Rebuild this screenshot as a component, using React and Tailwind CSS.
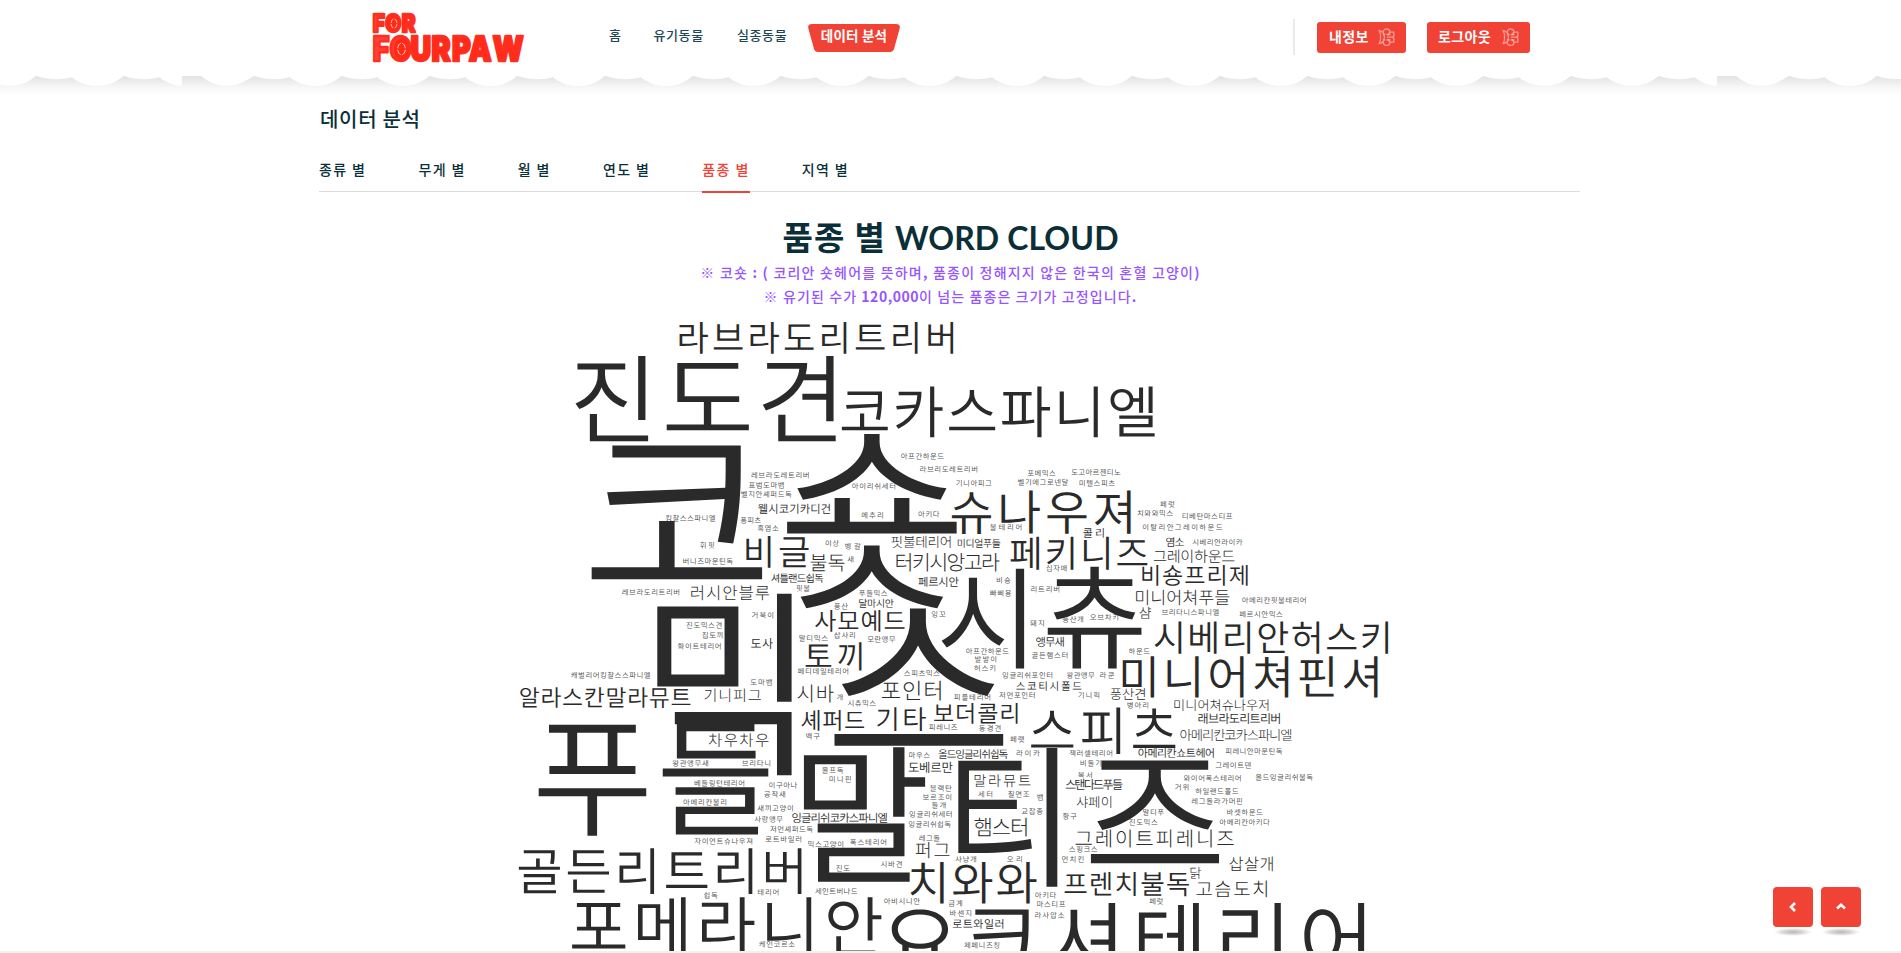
import React from "react";

const CLOUD_FONT = '"Noto Sans CJK KR", "Noto Sans", sans-serif';

/* Words whose syllables are placed one by one: [text, [x0, y0, x1, y1], ...] */
const HERO_WORDS = [
  ["진도견", [574.5, 355.7, 648, 442], [666, 363, 748.5, 431], [762, 355.7, 835.3, 442]],
  ["코숏", [591, 445, 761.7, 580.7], [786.3, 432.7, 956, 608.3]],
  ["믹스", [656, 593, 791.5, 776.3], [833.7, 608, 1003.3, 746.7]],
  ["푸들", [538, 724, 646, 836], [662, 722.7, 768.3, 834]],
  ["말티즈", [803.3, 747, 925, 883], [957, 747, 1057, 887], [1090, 760, 1218.7, 863]],
  ["시츄", [940.7, 569, 1024, 669], [1047, 566, 1141, 669]],
  [
    "요크셔테리어",
    [884, 909.5, 955, 972],
    [966, 909.5, 1037, 971],
    [1049, 902.7, 1114.7, 981],
    [1138.3, 902.7, 1198.5, 981],
    [1222, 902.7, 1280.5, 981],
    [1303.7, 902.7, 1363.7, 981],
  ],
];

/* Words fitted to a box: [text, x0, y0, x1, y1] */
const WORDS = [
  ["라브라도리트리버", 679, 322.3, 952.5, 354.3],
  ["코카스파니엘", 841.3, 386.7, 1154.3, 438],
  ["슈나우져", 951.3, 490, 1130, 534],
  ["비글", 745.7, 536, 808, 568],
  ["불독", 810, 554.5, 844, 572],
  ["페키니즈", 1010, 536.7, 1147, 570],
  ["터키시앙고라", 896, 552.7, 999, 571.3],
  ["핏불테리어", 891, 535.7, 950, 548],
  ["콜리", 1082.7, 528, 1103.3, 538],
  ["염소", 1165.7, 537, 1183.3, 546.7],
  ["그레이하운드", 1153.3, 549, 1234, 562.7],
  ["비숑프리제", 1141.7, 565, 1247, 586],
  ["미니어쳐푸들", 1135.7, 589.3, 1229, 605],
  ["샴", 1139, 606.7, 1150.5, 619],
  ["시베리안허스키", 1154, 621.7, 1387.7, 654.3],
  ["미니어쳐핀셔", 1122, 656, 1377, 697.7],
  ["풍산견", 1110, 688, 1144.5, 700],
  ["미니어쳐슈나우저", 1174, 699, 1268, 711],
  ["래브라도리트리버", 1198, 713, 1279.5, 724],
  ["아메리칸코카스파니엘", 1180, 729, 1291, 741],
  ["아메리칸쇼트헤어", 1138, 748, 1213.3, 758],
  ["미디얼푸들", 957.3, 539, 1000, 548],
  ["페르시안", 918, 576.7, 958, 587],
  ["웰시코기카디건", 757.7, 504, 829.7, 514.3],
  ["셔틀랜드쉽독", 770.7, 573.5, 822.7, 583],
  ["러시안블루", 690.7, 585, 768.7, 600],
  ["달마시안", 858.7, 599, 893, 608],
  ["사모예드", 814.7, 610, 904, 632],
  ["토끼", 805, 642, 861, 670.5],
  ["도사", 750.7, 638, 772.3, 649],
  ["앵무새", 1035.7, 637, 1063.3, 647.3],
  ["시바", 797, 684, 833, 702],
  ["포인터", 881.3, 681, 940.3, 701],
  ["스코티시폴드", 1015.7, 681.7, 1081, 691.3],
  ["셰퍼드", 801, 710, 863.7, 731],
  ["기타", 876.7, 707, 925.5, 731],
  ["보더콜리", 933.7, 703, 1017, 724],
  ["스피츠", 1030.7, 707, 1175, 754],
  ["알라스칸말라뮤트", 519.7, 687, 690, 708],
  ["기니피그", 704, 688.7, 760.3, 702.3],
  ["차우차우", 708.3, 733, 768, 747],
  ["골든리트리버", 518.3, 848, 801, 894],
  ["포메라니안", 571.5, 896.7, 881, 956],
  ["말라뮤트", 974, 774, 1030, 787],
  ["도베르만", 908, 761.7, 952, 773],
  ["올드잉글리쉬쉽독", 938, 749, 1007.3, 758.7],
  ["햄스터", 974, 818, 1026, 837],
  ["퍼그", 915, 841.7, 949, 858.3],
  ["치와와", 910, 862, 1036, 904],
  ["잉글리쉬코카스파니엘", 791.7, 813, 886.7, 823.3],
  ["스탠다드푸들", 1065, 779, 1122, 790],
  ["샤페이", 1076, 796, 1110.7, 808],
  ["그레이트피레니즈", 1075, 829, 1233, 847],
  ["삽살개", 1229, 857, 1272.3, 871.7],
  ["닭", 1190, 867, 1202, 879],
  ["고슴도치", 1196, 880, 1266.3, 897],
  ["프렌치불독", 1064, 871.7, 1188.5, 896.3],
  ["로트와일러", 952.3, 919, 1002.7, 929],
];

/* Rare breeds share the smallest size: [text, x0, x1, centreY] */
const SMALL_WORDS = [
  ["레브라도레트리버", 751, 808.3, 475], ["표범도마뱀", 748.3, 783.3, 485], ["벨지안셰퍼드독", 741, 791, 494],
  ["킹찰스스파니엘", 665.3, 714.7, 518.3], ["퐁피츠", 740, 760.3, 520], ["흑염소", 757, 778, 528.3],
  ["휘핏", 699.7, 713.7, 545.3], ["버니즈마운틴독", 682.7, 732.3, 561], ["아프간하운드", 900.7, 943.3, 456],
  ["라브리도레트리버", 919.7, 976.7, 469], ["아이리쉬세터", 851.7, 894.7, 486], ["메추리", 861.3, 882.3, 515],
  ["아키다", 918, 939, 514], ["이상", 825, 838.3, 543], ["벵갈", 844.7, 860, 546.7], ["새", 847, 853, 559],
  ["기니아피그", 955.7, 991, 483], ["포메믹스", 1027, 1055, 473], ["도고아르젠티노", 1071, 1120, 472.3],
  ["벨기에그로넨달", 1017.7, 1067.7, 482.3], ["미텔스피츠", 1079, 1114.3, 483], ["페럿", 1159.7, 1173.7, 504],
  ["치와와믹스", 1137, 1172.3, 513], ["티베탄마스티프", 1182, 1231.7, 516], ["이탈리안그레이하운드", 1142.3, 1221.7, 527.7],
  ["불테리어", 989.7, 1021, 527], ["시베리안라이카", 1192, 1242, 542.3], ["십자매", 1045.7, 1066, 568.3],
  ["비숑", 996.3, 1010, 580.3], ["빠삐용", 989.7, 1010.7, 593], ["리트리버", 1030.7, 1058.7, 589],
  ["아메리칸핏불테리어", 1241.7, 1305.3, 600.7], ["브리타니스파니엘", 1161.3, 1218.3, 612.3], ["페르시안믹스", 1239, 1282, 614.3],
  ["오브차키", 1089.7, 1117.7, 617], ["풍산개", 1062, 1082.7, 619], ["돼지", 1029.7, 1043.3, 623], ["잉꼬", 931.3, 945, 614.3],
  ["푸들믹스", 858.7, 886.7, 593.3], ["풍산", 833.7, 847.3, 606], ["핏불", 796, 809.3, 588.3], ["말티믹스", 799, 827.3, 638.3],
  ["삽사리", 833.7, 854.3, 635.7], ["모란앵무", 867, 894.7, 639.3], ["페티데일테리어", 797.3, 847.7, 671.3],
  ["스피츠믹스", 903.7, 939, 673], ["아프간하운드", 965.7, 1008.3, 651], ["발발이", 974.7, 995.7, 659.7],
  ["허스키", 973.7, 994.7, 668.3], ["골든햄스터", 1031.3, 1067, 655.3], ["잉글리쉬포인터", 1002, 1051.7, 675.3],
  ["왕관앵무", 1066.3, 1094, 675.3], ["라쿤", 1099.7, 1113.7, 675.3], ["하운드", 1128.3, 1149.3, 651],
  ["기니픽", 1077.7, 1098.7, 695], ["저먼포인터", 998.7, 1034.3, 695], ["피플테리어", 953.7, 989.7, 697],
  ["개", 836.3, 842.7, 697.7], ["시츄믹스", 847.3, 875.3, 703], ["병아리", 1127, 1147.7, 705.3], ["피레니즈", 928.7, 956.7, 727],
  ["동경견", 978.7, 1000, 728], ["백구", 805.7, 819.3, 736], ["페랫", 1009.7, 1023.7, 739.3], ["마우스", 908.7, 929.3, 755],
  ["라이카", 1016, 1039, 753.7], ["잭러셀테리어", 1069, 1111.7, 753.7], ["피레니안마운틴독", 1225, 1281.7, 751.7],
  ["비둘기", 1080, 1100.7, 763.3], ["그레이트덴", 1215, 1250.3, 765.3], ["복서", 1077.7, 1091.3, 775.3],
  ["와이어폭스테리어", 1183.3, 1240.3, 778.3], ["올드잉글리쉬불독", 1255, 1312.3, 777.3], ["거위", 1174.7, 1188, 787.3],
  ["하일랜드폴드", 1195, 1237.7, 791.3], ["레그돌라가머핀", 1191.3, 1241.7, 801.3], ["바셋하운드", 1226.7, 1262, 812],
  ["아메리칸아키다", 1219.3, 1269.3, 822.3], ["말티푸", 1142.7, 1163.3, 812.3], ["진도믹스", 1128.7, 1157, 822.3],
  ["황구", 1062.3, 1076, 816.3], ["스핑크스", 1068.7, 1096.7, 849.3], ["먼치킨", 1061.7, 1083, 859], ["페럿", 1149, 1162.3, 901.7],
  ["레브라도리트리버", 621.7, 678.7, 592.3], ["진도믹스견", 686, 721, 625], ["집토끼", 701.7, 722, 635],
  ["화이트테리어", 677.3, 720.3, 646.3], ["거북이", 751.3, 772.7, 615.3], ["도마뱀", 750, 771.3, 682],
  ["캐벌리어킹찰스스파니엘", 570.7, 649.7, 675.3], ["왕관앵무새", 672, 707.7, 763.3], ["브리타니", 741.7, 769.7, 763.3],
  ["베들링턴테리어", 694, 743.7, 783.3], ["이구아나", 768.7, 796.7, 785], ["공작새", 763.7, 784.7, 794.3],
  ["아메리칸불리", 683, 725.7, 802.3], ["새끼고양이", 757, 792.3, 808.3], ["사랑앵무", 754, 782.3, 819.3],
  ["저먼셰퍼드독", 769.7, 812.3, 829.3], ["로트바일러", 765, 800.7, 839.3], ["자이언트슈나우져", 694, 751.7, 841],
  ["쉽독", 703.3, 717, 895.3], ["테리어", 757.3, 778, 892], ["케인코르소", 758.7, 794.3, 944], ["울프독", 821.7, 842.7, 770.3],
  ["미니핀", 829, 850.3, 779.7], ["블랙탄", 929.7, 951, 788.3], ["보르조이", 922.3, 950.7, 797], ["들개", 931.3, 945, 805.3],
  ["잉글리쉬세터", 909, 951.3, 814], ["잉글리쉬쉽독", 908.3, 950.3, 824], ["레그돌", 918.7, 939.3, 838.3],
  ["세터", 977.7, 991.7, 794], ["칠면조", 1007.7, 1028.7, 794], ["뱀", 1037, 1043.3, 797], ["교잡종", 1021, 1042.3, 811],
  ["사냥개", 954.7, 975.7, 859], ["오리", 1006.7, 1021.3, 859.7], ["믹스고양이", 807.7, 842.7, 844], ["폭스테리어", 849.7, 885.7, 842],
  ["진도", 835.7, 849.3, 868], ["시바견", 880.3, 901.3, 864], ["세인트버나드", 814.7, 856.7, 891], ["아비시니안", 883.7, 919.3, 901.3],
  ["금계", 948, 961.7, 903.3], ["바센지", 949.7, 970.7, 913.3], ["아키타", 1034.7, 1055.7, 895], ["마스티프", 1036.7, 1064.7, 904],
  ["라사압소", 1034.7, 1063.7, 915], ["제페니즈칭", 963.7, 998.7, 945],
];

let measureContext = null;

/* Ink extents of a string, in em */
function inkOf(text, weight) {
  if (!measureContext) measureContext = document.createElement("canvas").getContext("2d");
  measureContext.font = `${weight} 200px ${CLOUD_FONT}`;
  const m = measureContext.measureText(text);
  return {
    left: m.actualBoundingBoxLeft / 200,
    right: m.actualBoundingBoxRight / 200,
    top: m.actualBoundingBoxAscent / 200,
    bottom: m.actualBoundingBoxDescent / 200,
  };
}

function FittedWord({ text, x0, y0, x1, y1 }) {
  const height = y1 - y0;
  const weight = height > 20.5 || height < 11.5 ? 350 : 300;
  const ink = inkOf(text, weight);
  const size = height / (ink.top + ink.bottom);
  const natural = (ink.left + ink.right) * size;
  const spacing = text.length > 1 ? (x1 - x0 - natural) / (text.length - 1) : 0;
  return (
    <text x={x0 + ink.left * size} y={y0 + ink.top * size} fontSize={size} fontWeight={weight} letterSpacing={spacing}>
      {text}
    </text>
  );
}

function HeroSyllable({ char, box }) {
  const [x0, y0, x1, y1] = box;
  const ink = inkOf(char, 350);
  const size = (y1 - y0) / (ink.top + ink.bottom);
  const stretch = (x1 - x0) / ((ink.left + ink.right) * size);
  return (
    <text
      fontSize={size}
      fontWeight={350}
      transform={`translate(${x0 + ink.left * size * stretch} ${y0 + ink.top * size}) scale(${stretch} 1)`}
    >
      {char}
    </text>
  );
}

function SmallWord({ text, x0, x1, cy }) {
  const size = 7.4;
  const ink = inkOf(text, 400);
  const natural = (ink.left + ink.right) * size;
  const spacing = text.length > 1 ? (x1 - x0 - natural) / (text.length - 1) : 0;
  return (
    <text x={x0 + ink.left * size} y={cy + ((ink.top - ink.bottom) / 2) * size} fontSize={size} letterSpacing={spacing}>
      {text}
    </text>
  );
}

function WordCloud() {
  return (
    <svg
      className="mx-auto block h-[636px] w-[900px] shrink-0 fill-[#2a2a2a]"
      viewBox="500.5 315 900 636"
      style={{ fontFamily: CLOUD_FONT }}
      textRendering="geometricPrecision"
    >
      {HERO_WORDS.map(([text, ...boxes]) => (
        <g key={text}>
          {boxes.map((box, i) => (
            <HeroSyllable key={i} char={text[i]} box={box} />
          ))}
        </g>
      ))}
      {WORDS.map(([text, x0, y0, x1, y1]) => (
        <FittedWord key={text} text={text} x0={x0} y0={y0} x1={x1} y1={y1} />
      ))}
      <g fillOpacity="0.8">
        {SMALL_WORDS.map(([text, x0, x1, cy], i) => (
          <SmallWord key={i} text={text} x0={x0} x1={x1} cy={cy} />
        ))}
      </g>
    </svg>
  );
}

function Logo() {
  return (
    <svg className="h-[54px] w-[158px] shrink-0 overflow-visible" viewBox="0 0 158 54">
      <defs>
        <linearGradient id="logo-red" x1="0" y1="0" x2="1" y2="0">
          <stop offset="0" stopColor="#ff4438" />
          <stop offset="0.3" stopColor="#ff2a18" />
          <stop offset="1" stopColor="#ff2d1c" />
        </linearGradient>
      </defs>
      <g fill="url(#logo-red)" stroke="#ff2f1f" strokeWidth="2.4" strokeLinejoin="round" fontFamily="Inter, sans-serif" fontWeight="900" transform="scale(0.84 1)">
        <text x="2 17 36.500" y="20.3" fontSize="24.5">FOR</text>
        <text x="2 22 47 72 96.500 116.500 145" y="49" fontSize="34">FOURPAW</text>
      </g>
      <g fill="#ff2a18">
        <ellipse cx="23" cy="11.5" rx="5.500" ry="7.500" />
        <ellipse cx="30.5" cy="37" rx="7.500" ry="10.500" />
      </g>
      <g fill="none" stroke="#fff" strokeOpacity="0.75" strokeWidth="1">
        <ellipse cx="23" cy="11.5" rx="2.800" ry="4.400" />
        <ellipse cx="30.5" cy="37" rx="3.800" ry="5.800" />
      </g>
      <path d="M19.500 11.500h7M23 6.500v10M26 37h9M30.500 30.500v13" stroke="#ff2a18" strokeWidth="1.6" />
    </svg>
  );
}

/* Outlined flower drawn behind the label end of a button */
function Flower() {
  return (
    <svg className="h-[18px] w-[17px]" viewBox="0 0 17 18" fill="none" stroke="#fff" strokeOpacity="0.45" strokeWidth="1.3" strokeLinejoin="round">
      <path d="M1 2.500c2 .2 3.400 1 4.200 2.500C5 3 6 1 8.200 1c2.300 0 3.800 1.400 3.800 3.200h3.800v4.200l-1.400.8 1.400.8v4.200H12c0 1.800-1.500 3.200-3.800 3.200-2.200 0-3.200-1.800-3-4C4.400 14.900 3 15.500 1 15.700l1.500-3.400V6z" />
      <path d="M5.200 5l2 2.200M5.200 13.400l2-2.200M12 4.200L10 7M12 14.200l-2-3M8.800 9.200h5.600" />
      <path d="M5 6.500c2 1.500 2 4 0 5.500M8.500 6.500h4M8.500 12h4" />
    </svg>
  );
}

/* One tile of the cloud-shaped header edge, 1535 wide */
function scallopTile(start) {
  let d = `M${start} -1H${start + 1535}V10`;
  for (let k = 16; k >= 0; k--) {
    const left = start + 72 + 87.8 * k;
    const right = left + 35.6;
    if (k === 16) d += `C${right + 14} 9.500 ${right + 6} 6 ${right} 1.200`;
    else d += `C${right + 42} 8 ${right + 34} 9.800 ${right + 26} 9.800C${right + 14} 9.800 ${right + 6} 6 ${right} 1.200`;
    d += `C${right - 10} 4 ${left + 12} 4 ${left} -0.200`;
  }
  d += `C${start + 60} 7 ${start + 55} 9.800 ${start + 44} 9.800C${start + 32} 9.800 ${start + 26} 5 ${start + 19} 0H${start}Z`;
  return d;
}

function HeaderEdge() {
  return (
    <div className="h-[22px] w-full bg-[linear-gradient(to_bottom,#e3e3e3_0px,#ebebeb_5px,#f5f5f5_10px,#fbfbfb_15px,#ffffff_21px)]">
      <svg className="block h-[22px] w-[1901px]" viewBox="0 0 1901 22" fill="#fff">
        <path d={scallopTile(-1353)} />
        <path d={scallopTile(182)} />
        <path d={scallopTile(1717)} />
      </svg>
    </div>
  );
}

function NavLink({ className, children }) {
  return <a className={`text-[13px] font-medium tracking-[0.6px] text-[#204853] ${className}`}>{children}</a>;
}

function HeaderButton({ className, children }) {
  return (
    <button className={`flex h-[31px] items-center justify-between rounded-[3px] bg-[#f04336] pr-[11px] text-[14px] font-bold tracking-[0.4px] text-white ${className}`}>
      <span className="relative -top-px whitespace-nowrap">{children}</span>
      <Flower />
    </button>
  );
}

function Header() {
  return (
    <header>
      <div className="flex h-[76px] items-start pl-[371px]">
        <div className="pt-[12px]">
          <Logo />
        </div>
        <nav className="flex h-[70px] items-center whitespace-nowrap pl-[80px]">
          <NavLink className="w-[44.500px]">홈</NavLink>
          <NavLink className="w-[83.500px]">유기동물</NavLink>
          <NavLink className="w-[71px]">실종동물</NavLink>
          <a className="relative flex h-[28px] w-[92px] items-center justify-center text-[13.500px] font-bold tracking-[0.2px] text-white">
            <svg className="absolute inset-0 mt-[3px]" width="92" height="28" viewBox="0 0 92 28" fill="#f04336">
              <path d="M4 0H88Q93 0 91.500 5L86 25Q85 28 82 28H10Q7 28 6 25L.5 5Q-1 0 4 0Z" />
            </svg>
            <span className="relative">데이터 분석</span>
          </a>
        </nav>
        <div className="flex items-center pl-[393px] pt-[19px]">
          <div className="h-[36px] w-[2px] bg-[#ecece6]" />
          <HeaderButton className="ml-[22px] w-[89px] pl-[12px]">내정보</HeaderButton>
          <HeaderButton className="ml-[21px] w-[103px] pl-[11px]">로그아웃</HeaderButton>
        </div>
      </div>
      <HeaderEdge />
    </header>
  );
}

const TABS = ["종류 별", "무게 별", "월 별", "연도 별", "품종 별", "지역 별"];

function Tabs() {
  return (
    <div className="mt-[18px] flex h-[41px] gap-[52px] border-b border-[#dcdcdc]">
      {TABS.map((tab) => (
        <a
          key={tab}
          className={
            tab === "품종 별"
              ? "h-[42px] border-b-[2px] border-[#f04336] pt-[8px] text-[14px] font-medium leading-[21px] tracking-[1.4px] text-[#f04336]"
              : "h-[42px] pt-[8px] text-[14px] font-medium leading-[21px] tracking-[1.4px] text-[#0b2f38]"
          }
        >
          {tab}
        </a>
      ))}
    </div>
  );
}

function FloatingButton({ children }) {
  return (
    <div className="flex flex-col items-center">
      <button className="flex h-[40px] w-[40px] items-center justify-center rounded-[4px] bg-[#f04336]">
        <svg width="12" height="12" viewBox="0 0 12 12" fill="none" stroke="#fff" strokeWidth="2.600">
          {children}
        </svg>
      </button>
      <div className="mt-px h-[8px] w-[38px] bg-[radial-gradient(closest-side,#b5b5b5,#dedede_60%,transparent)]" />
    </div>
  );
}

export default function App() {
  return (
    <div className="relative flex h-[953px] w-[1901px] flex-col overflow-hidden bg-white font-['Noto_Sans_CJK_KR','Noto_Sans',sans-serif]">
      <Header />
      <section className="ml-[319px] w-[1261px]">
        <h4 className="pl-px pt-[7px] text-[20px] font-medium leading-[28px] tracking-[0.700px] text-[#0b2f38]">데이터 분석</h4>
        <Tabs />
      </section>
      <section className="flex flex-col items-center">
        <h2 className="mt-[21px] h-[47px] whitespace-nowrap text-[33px] font-bold leading-[46px] tracking-[1.300px] text-[#0b2f38]">
          품종 별 <span className="font-['Lato'] text-[32px] font-bold tracking-[0.1px]">WORD CLOUD</span>
        </h2>
        <p className="h-[24px] whitespace-nowrap text-[14px] font-medium leading-[24px] tracking-[1.200px] text-[#9655ff]">
          ※ 코숏 <b>: (</b> 코리안 숏헤어를 뜻하며<b>,</b> 품종이 정해지지 않은 한국의 혼혈 고양이<b>)</b>
        </p>
        <p className="h-[24px] whitespace-nowrap text-[14px] font-medium leading-[24px] tracking-[1.100px] text-[#9655ff]">
          ※ 유기된 수가 <b className="tracking-[0.5px]">120,000</b>이 넘는 품종은 크기가 고정입니다<b>.</b>
        </p>
      </section>
      <div className="mt-auto">
        <WordCloud />
      </div>
      <footer className="h-[2px] shrink-0 bg-[#f0f0f0]" />
      <div className="absolute bottom-[17px] right-[40px] flex gap-[8px]">
        <FloatingButton>
          <path d="M8 2L4 6l4 4" />
        </FloatingButton>
        <FloatingButton>
          <path d="M2 7.500l4-3.800 4 3.800" />
        </FloatingButton>
      </div>
    </div>
  );
}
